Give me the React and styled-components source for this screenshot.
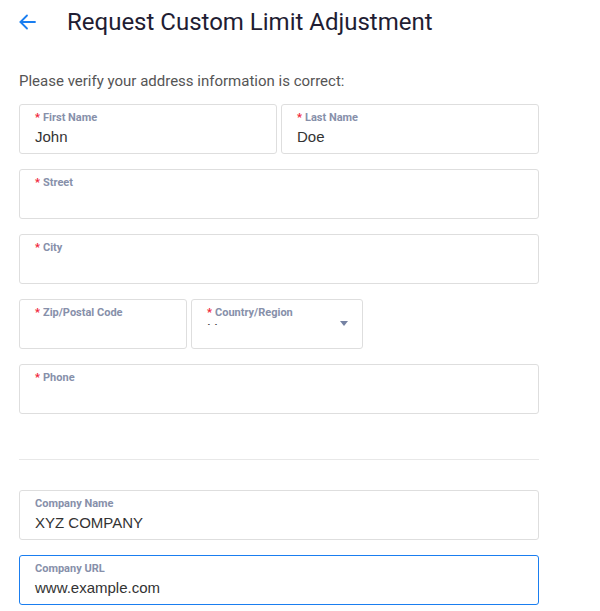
import React from "react";
import styled, { createGlobalStyle } from "styled-components";

const Global = createGlobalStyle`
  html, body { margin: 0; padding: 0; background: #fff; }
  body { font-family: Roboto, "Liberation Sans", Arial, sans-serif; }
  * { box-sizing: border-box; }
`;

const Page = styled.div`
  width: 600px;
  padding: 0 0 0 19px;
`;

const Header = styled.div`
  display: flex;
  align-items: center;
  height: 44px;
`;

const BackButton = styled.button`
  border: none;
  background: none;
  padding: 0;
  width: 48px;
  height: 24px;
  display: flex;
  align-items: center;
  color: #1a7ef0;
  cursor: pointer;
`;

const Title = styled.h1`
  margin: 0;
  font-size: 24px;
  font-weight: 400;
  color: #1f1d33;
`;

const Intro = styled.p`
  margin: 27px 0 0;
  font-size: 15px;
  line-height: 20px;
  color: #555;
`;

const Form = styled.div`
  width: 520px;
  display: flex;
  flex-direction: column;
  gap: 15px;
  margin-top: ${(p) => p.$top || "13px"};
`;

const Row = styled.div`
  display: grid;
  grid-template-columns: ${(p) => p.$cols};
  gap: 4px;
`;

const Box = styled.div`
  position: relative;
  height: 50px;
  border: 1px solid ${(p) => (p.$focused ? "#1a7ef0" : "#dedede")};
  border-radius: 3px;
  padding: 6px 15px 0;
  background: #fff;
  overflow: hidden;
`;

const Label = styled.div`
  font-size: 11px;
  line-height: 13px;
  font-weight: 700;
  color: #8790aa;
`;

const Star = styled.span`
  color: #f0243b;
  margin-right: 3px;
`;

const Value = styled.div`
  font-family: "Liberation Sans", Arial, sans-serif;
  font-size: 15px;
  line-height: 20px;
  margin-top: 3px;
  color: #333;
  white-space: nowrap;
`;

const SelectValue = styled.div`
  font-family: "Liberation Sans", Arial, sans-serif;
  font-size: 15px;
  line-height: 20px;
  height: 6px;
  overflow: hidden;
  color: #444;
  white-space: nowrap;
`;

const Caret = styled.span`
  position: absolute;
  right: 14px;
  top: 21px;
  width: 0;
  height: 0;
  border-left: 4.5px solid transparent;
  border-right: 4.5px solid transparent;
  border-top: 5px solid #7582a3;
`;

const Divider = styled.hr`
  border: none;
  border-top: 1px solid #e8e8e8;
  margin: 45px 0 0;
  width: 520px;
`;

function Field({ label, value, required, focused }) {
  return (
    <Box $focused={focused}>
      <Label>
        {required && <Star>*</Star>}
        {label}
      </Label>
      <Value>{value}</Value>
    </Box>
  );
}

export default function App() {
  return (
    <Page>
      <Global />
      <Header>
        <BackButton aria-label="Back">
          <svg width="17" height="16" viewBox="0 0 17 16" fill="none" stroke="currentColor" strokeWidth="1.8" strokeLinecap="round" strokeLinejoin="round">
            <line x1="16" y1="8" x2="1.5" y2="8" />
            <polyline points="8 1.5 1.5 8 8 14.5" />
          </svg>
        </BackButton>
        <Title>Request Custom Limit Adjustment</Title>
      </Header>
      <Intro>Please verify your address information is correct:</Intro>
      <Form>
        <Row $cols="258px 258px">
          <Field required label="First Name" value="John" />
          <Field required label="Last Name" value="Doe" />
        </Row>
        <Field required label="Street" value="" />
        <Field required label="City" value="" />
        <Row $cols="168px 172px">
          <Field required label="Zip/Postal Code" value="" />
          <Box>
            <Label>
              <Star>*</Star>Country/Region
            </Label>
            <SelectValue>U</SelectValue>
            <Caret />
          </Box>
        </Row>
        <Field required label="Phone" value="" />
      </Form>
      <Divider />
      <Form $top="30px">
        <Field label="Company Name" value="XYZ COMPANY" />
        <Field focused label="Company URL" value="www.example.com" />
      </Form>
    </Page>
  );
}
